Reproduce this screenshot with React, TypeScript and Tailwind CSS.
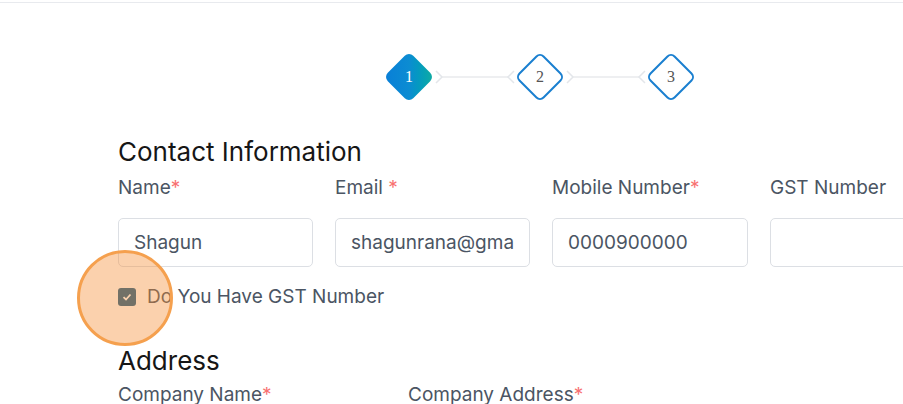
import React from "react";

type Field = { label: string; required?: boolean; spaced?: boolean; value?: string };

const contactFields: Field[] = [
  { label: "Name", required: true, value: "Shagun" },
  { label: "Email", required: true, spaced: true, value: "shagunrana@gmail.com" },
  { label: "Mobile Number", required: true, value: "0000900000" },
  { label: "GST Number", value: "" },
];

function Diamond({ n, active }: { n: number; active?: boolean }) {
  return (
    <div className="w-[51px] h-[51px] flex items-center justify-center shrink-0">
      <div
        className={`w-[36px] h-[36px] rotate-45 rounded-[6px] flex items-center justify-center ${
          active
            ? "bg-gradient-to-tr from-[#0a7ed8] via-[#0c8cd2] to-[#13ad9e]"
            : "bg-white border-2 border-[#1a7fd0]"
        }`}
      >
        <span
          className={`-rotate-45 text-[16px] ${active ? "text-white" : "text-[#555]"}`}
          style={{ fontFamily: '"Liberation Serif", serif' }}
        >
          {n}
        </span>
      </div>
    </div>
  );
}

function Connector() {
  return (
    <svg width="80" height="20" viewBox="0 0 80 20" className="shrink-0">
      <path d="M1 4 L7 10 L1 16" fill="none" stroke="#e3e6ea" strokeWidth="1.5" />
      <line x1="7" y1="10" x2="73" y2="10" stroke="#e8eaed" strokeWidth="1.5" />
      <path d="M79 4 L73 10 L79 16" fill="none" stroke="#e3e6ea" strokeWidth="1.5" />
    </svg>
  );
}

function Label({ f }: { f: Field }) {
  return (
    <div className="text-[19px] text-[#4b5563] leading-6 h-6 whitespace-nowrap">
      {f.label}
      {f.required && <span className="text-[#f87171]">{f.spaced ? " *" : "*"}</span>}
    </div>
  );
}

export default function App() {
  return (
    <div
      className="w-[903px] h-[404px] overflow-hidden bg-white relative"
      style={{ fontFamily: 'Inter, "Noto Sans", sans-serif' }}
    >
      <div className="mt-[2px] h-px bg-[#e8eaee] w-full" />

      <div className="ml-[118px] w-[844px]">
        <div className="flex items-center justify-center mt-[48px]">
          <Diamond n={1} active />
          <Connector />
          <Diamond n={2} />
          <Connector />
          <Diamond n={3} />
        </div>

        <h2 className="mt-[34px] text-[26px] leading-8 text-[#161616]">Contact Information</h2>

        <div className="grid grid-cols-[195px_195px_196px_1fr] gap-x-[22px] mt-[8px]">
          {contactFields.map((f) => (
            <div key={f.label}>
              <Label f={f} />
              <input
                readOnly
                value={f.value}
                className="mt-[18px] w-full h-[49px] rounded-[5px] border border-[#dcdfe4] px-[15px] text-[19px] text-[#4b5563] outline-none bg-white"
              />
            </div>
          ))}
        </div>

        <label className="flex items-center gap-[11px] mt-[18px] h-6">
          <span className="w-[18px] h-[18px] rounded-[3px] bg-[#1b5f8a] flex items-center justify-center">
            <svg width="12" height="12" viewBox="0 0 12 12">
              <path d="M2.5 6.2 L5 8.5 L9.5 3.5" fill="none" stroke="white" strokeWidth="1.8" />
            </svg>
          </span>
          <span className="text-[19px] text-[#4b5563]">Do You Have GST Number</span>
        </label>

        <h2 className="mt-[36px] text-[26px] leading-8 text-[#161616]">Address</h2>

        <div className="grid grid-cols-[268px_268px_1fr] gap-x-[22px] mt-[6px]">
          <Label f={{ label: "Company Name", required: true }} />
          <Label f={{ label: "Company Address", required: true }} />
        </div>
      </div>

      <div className="absolute left-[77px] top-[250px] w-[96px] h-[96px] rounded-full bg-[#f58c32]/40 border-[3px] border-[#f5a04e]" />
    </div>
  );
}
